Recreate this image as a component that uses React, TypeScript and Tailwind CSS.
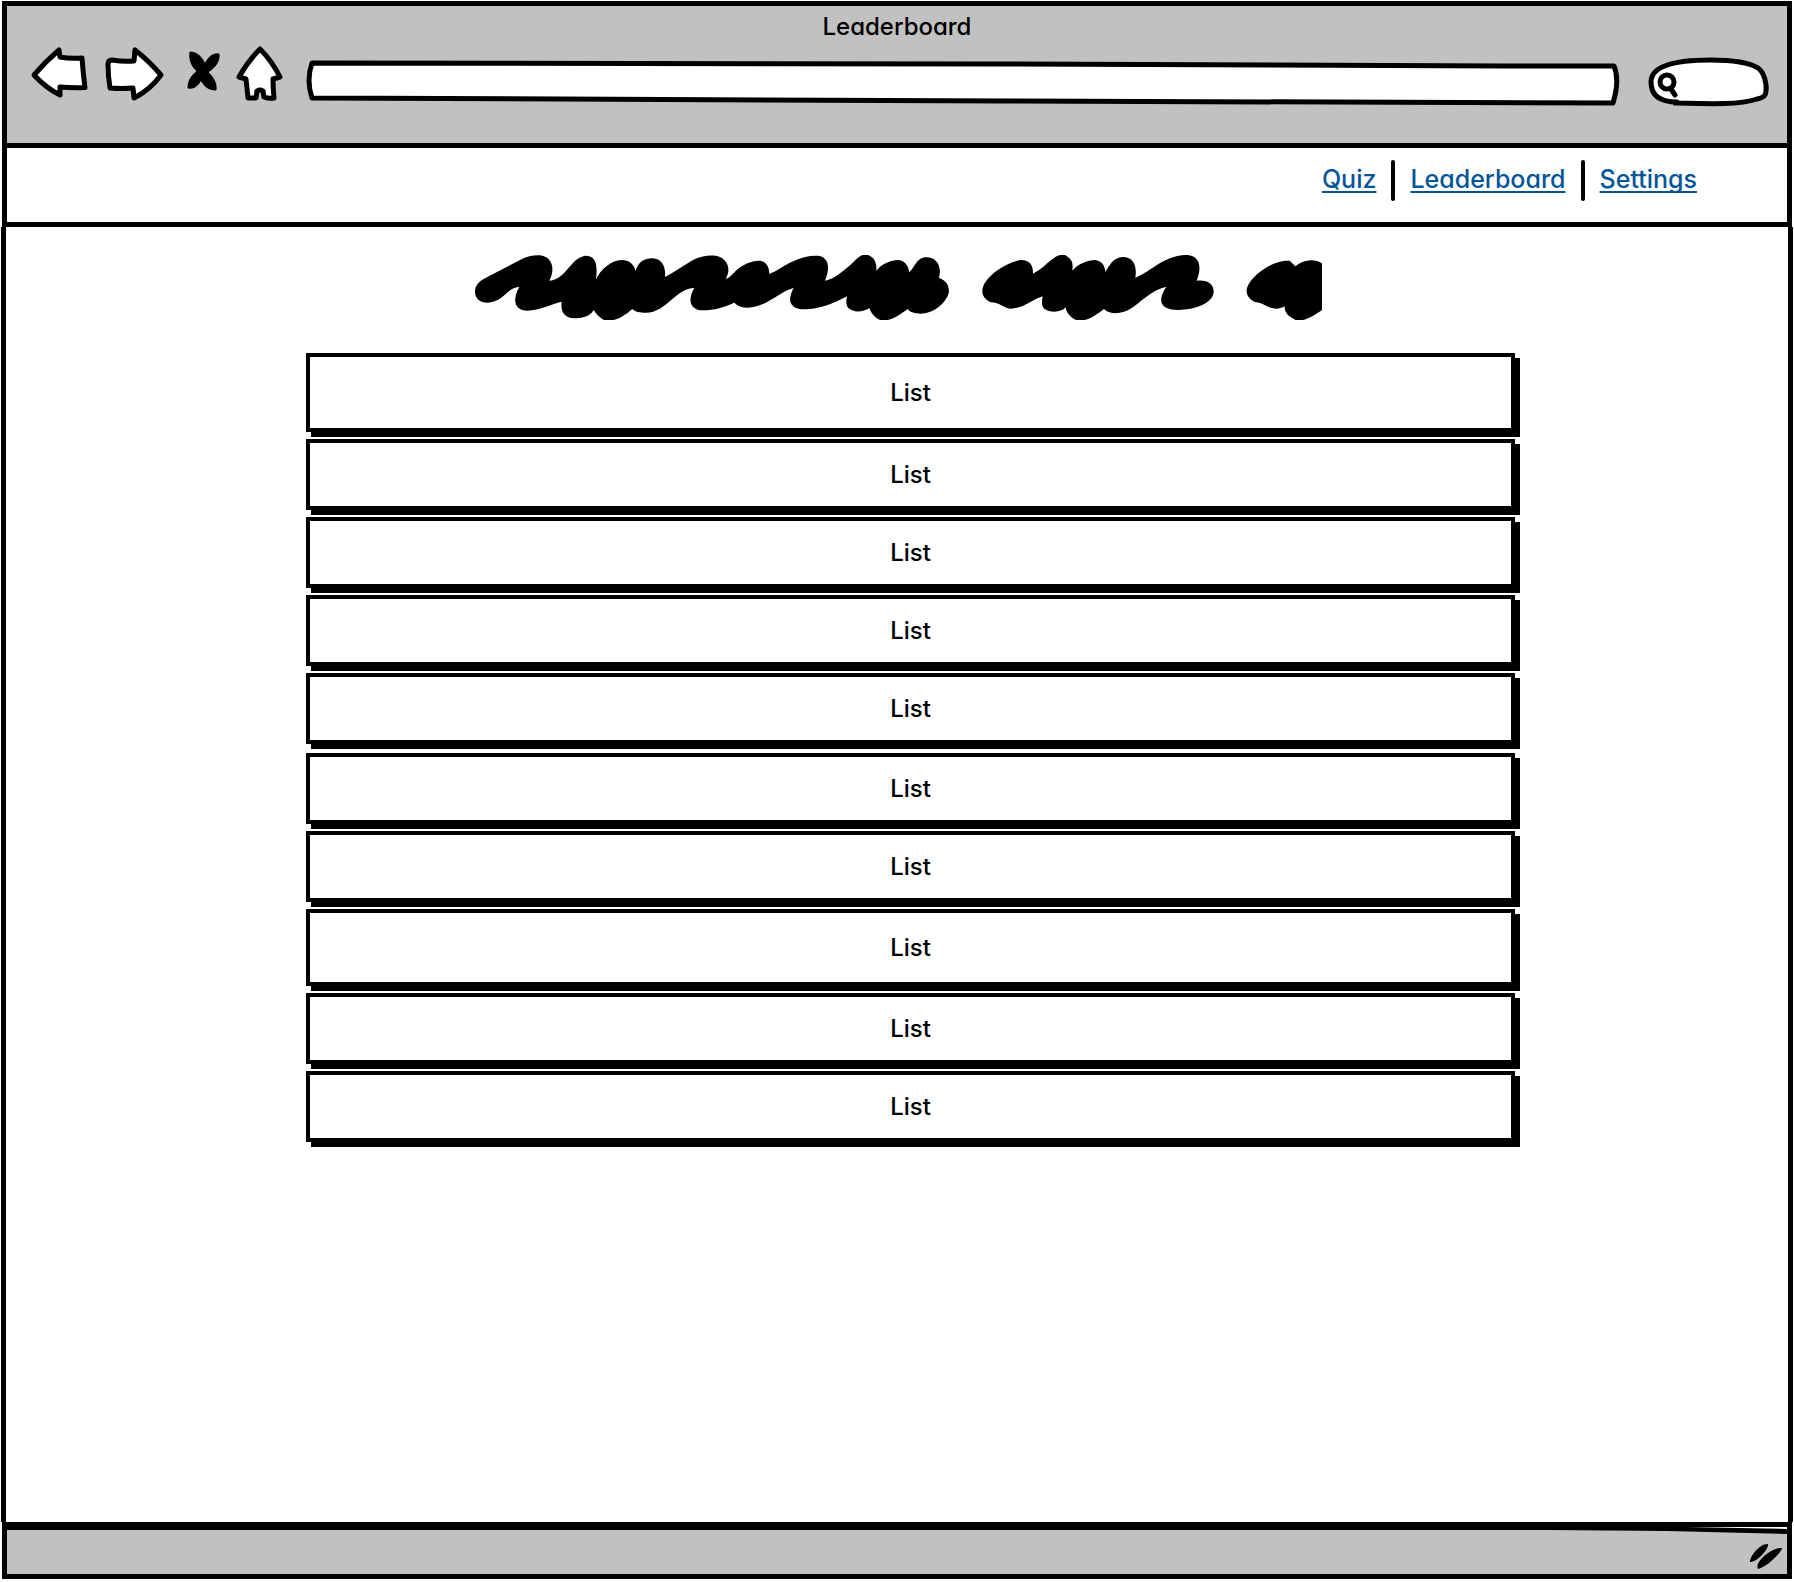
import React from "react";

const rows = [
  { height: "h-[79px]", gap: "mb-[7px]" },
  { height: "h-[71px]", gap: "mb-[7px]" },
  { height: "h-[71px]", gap: "mb-[7px]" },
  { height: "h-[71px]", gap: "mb-[7px]" },
  { height: "h-[71px]", gap: "mb-[9px]" },
  { height: "h-[71px]", gap: "mb-[7px]" },
  { height: "h-[71px]", gap: "mb-[7px]" },
  { height: "h-[77px]", gap: "mb-[7px]" },
  { height: "h-[71px]", gap: "mb-[7px]" },
  { height: "h-[71px]", gap: "mb-0" },
];

const links = ["Quiz", "Leaderboard", "Settings"];

const outline = {
  fill: "white",
  stroke: "black",
  strokeWidth: 5,
  strokeLinejoin: "round" as const,
  strokeLinecap: "round" as const,
};

function Toolbar() {
  return (
    <div className="flex items-end gap-2 pl-[23px] pr-[17px] mt-px">
      <button type="button" aria-label="Back" className="shrink-0">
        <svg width="64" height="64" viewBox="30 44 64 64" {...outline}>
          <path d="M34 75 Q46 61 59 50 L60 57 Q70 59 82 58 Q83 72 85 87.5 Q72 88 60 87 L60 95 Q46 88 34 75 Z" />
        </svg>
      </button>
      <button type="button" aria-label="Forward" className="shrink-0">
        <svg width="72" height="64" viewBox="102 44 72 64" {...outline}>
          <path d="M161 75 Q149 61 135 50 L134 61 Q124 62 112 60 Q108 60 108 64 Q108 76 110 88 Q122 89 133 88 L134 98 Q150 90 161 75 Z" />
        </svg>
      </button>
      <button type="button" aria-label="Stop" className="shrink-0">
        <svg width="44" height="64" viewBox="182 44 44 64">
          <path d="M190 52 C197 52 202 57 205 64 C208 57 213 53 219 54 C220 61 215 68 208 72 C213 77 217 83 216 90 C208 90 204 86 201 80 C198 86 194 89 188 88 C188 81 191 76 197 71 C191 66 189 59 190 52 Z" stroke="black" strokeWidth="1" />
        </svg>
      </button>
      <button type="button" aria-label="Home" className="shrink-0">
        <svg width="56" height="64" viewBox="234 44 56 64" {...outline}>
          <path d="M260 49 Q272 61 280 77 L273 79 Q273 88 274 98 Q269 99 264 97 L263 91 Q260 89 257 91 L256 98 L248 98 Q247 88 246 79 L239 77 Q248 61 260 49 Z" />
        </svg>
      </button>
      <div className="relative ml-2 h-[50px] min-w-0 flex-1">
        <svg
          className="absolute inset-0 size-full"
          viewBox="0 0 1314 50"
          preserveAspectRatio="none"
          aria-hidden="true"
          {...outline}
        >
          <path d="M6 5 L700 6 L1200 8 L1308 8 Q1314 22 1307 45 L700 43 L6 40 Q0 22 6 5 Z" />
        </svg>
        <input type="text" aria-label="Address" className="relative size-full bg-transparent px-4 outline-none" />
      </div>
      <div className="relative ml-4 h-[54px] w-[126px] shrink-0">
        <svg className="absolute inset-0 size-full" viewBox="-1 0 126 54" aria-hidden="true" {...outline}>
          <path d="M32 48 C16 48 6 42 6 28 C6 12 30 6 65 6 C88 6 105 9 113 14 C119 18 122 30 121 37 C121 42 118 44 112 45 C95 51 65 50 30 49" />
          <circle cx="22" cy="28" r="7" />
          <path d="M26 35 L30 41" />
        </svg>
        <input type="search" aria-label="Search" className="relative size-full bg-transparent pl-10 pr-3 outline-none" />
      </div>
    </div>
  );
}

function Scribble() {
  return (
    <svg
      className="mx-auto mt-[13px] block h-[90px] w-[880px]"
      viewBox="-9 0 2640 270"
      role="img"
      aria-label="Heading"
    >
      <path d="M45 155 C45 138 55 124 82 111 L180 60 C205 47 228 44 247 47 C275 53 287 85 268 122 C285 122 300 112 315 96 C335 74 348 52 375 47 C405 46 414 68 408 118 C422 88 455 60 485 60 C508 60 522 74 527 93 C534 66 552 55 577 55 C606 56 618 80 615 111 C640 98 665 80 695 62 C725 46 758 43 778 50 C805 62 813 90 797 116 C812 114 818 98 835 86 C860 68 885 60 904 63 C922 68 928 85 928 102 C955 92 975 74 1000 64 C1032 49 1062 45 1082 49 C1107 58 1110 86 1095 122 C1125 117 1145 96 1170 76 C1185 62 1197 48 1208 45 L1224 45 C1245 52 1251 72 1249 93 C1263 72 1292 60 1315 60 C1335 62 1345 77 1348 97 C1362 85 1368 57 1393 52 C1425 47 1448 75 1437 113 C1458 121 1470 138 1466 160 C1455 194 1418 221 1381 221 C1366 221 1350 217 1343 207 C1325 220 1305 236 1283 240 L1260 240 C1241 231 1233 218 1228 204 C1208 218 1178 217 1166 205 C1157 196 1158 182 1161 169 C1122 191 1072 209 1032 208 C988 207 981 180 1001 144 C966 152 933 187 890 199 C862 207 838 204 823 188 C795 201 762 211 728 211 C689 210 682 178 703 144 C676 145 658 160 638 176 C612 199 588 218 558 218 C540 218 525 216 517 207 C500 222 480 236 461 240 L432 240 C418 234 408 221 401 210 C390 229 368 235 343 235 C312 234 301 214 305 185 C275 192 240 211 202 212 C166 212 154 183 178 141 C145 139 130 187 82 188 C60 188 45 175 45 155 Z" />
      <path
        transform="translate(1500 0)"
        d="M67 154 C67 116 128 71 180 60 C208 58 220 75 219 101 C242 91 264 66 285 52 C294 45 300 44 315 45 C336 58 340 66 337 92 C352 73 382 60 407 60 C426 64 435 77 436 96 C448 77 459 53 488 51 C519 51 532 75 526 113 C560 99 584 76 618 60 C652 44 685 41 701 50 C723 64 722 91 710 122 C743 118 762 132 761 157 C758 190 704 210 655 210 C598 210 592 180 619 140 C573 150 540 189 509 208 C487 222 450 225 432 207 C414 220 394 237 372 240 L348 240 C329 231 319 217 317 202 C304 218 269 219 253 206 C244 198 245 184 248 169 C218 178 190 206 151 206 C133 207 121 187 92 187 C77 180 67 168 67 154 Z"
      />
      <path
        transform="translate(1500 0)"
        d="M860 153 C861 118 924 68 974 62 L989 62 L1006 79 C1028 60 1062 54 1086 70 L1086 210 C1066 223 1048 237 1028 240 L1007 240 C985 229 973 219 974 199 C957 210 937 206 924 200 C909 193 900 187 884 186 C871 179 860 169 860 153 Z"
      />
    </svg>
  );
}

export default function App() {
  return (
    <div className="flex min-h-screen flex-col bg-white px-0.5 pb-[3px] pt-px font-['Inter','Liberation_Sans',sans-serif] text-[24px] font-medium leading-8 text-black [font-feature-settings:'cv11']">
      <header className="border-5 border-black bg-[#c1c1c1] pb-[35px] pt-[5px]">
        <h1 className="text-center">Leaderboard</h1>
        <Toolbar />
      </header>
      <nav className="flex justify-end border-x-5 border-b-5 border-black pb-[21px] pr-[90px] pt-3 text-[25px]">
        {links.map((label, i) => (
          <React.Fragment key={label}>
            {i > 0 && <span className="mx-[15px] h-[41px] w-1 rounded-full bg-black" />}
            <a
              href="#"
              className="pt-[3px] leading-8 text-[#04549a] underline decoration-2 underline-offset-3 [text-decoration-skip-ink:none]"
            >
              {label}
            </a>
          </React.Fragment>
        ))}
      </nav>
      <main className="-mx-px flex-1 border-x-5 border-black">
        <Scribble />
        <ul className="mt-[23px] pl-[300px] pr-[273px]">
          {rows.map((row, i) => (
            <li
              key={i}
              className={`flex items-center justify-center border-4 border-black bg-white shadow-[5px_5px_0_0_#000] ${row.height} ${row.gap}`}
            >
              List
            </li>
          ))}
        </ul>
      </main>
      <footer className="relative flex h-[57px] justify-end border-5 border-t-8 border-black bg-[#c1c1c1]">
        <svg
          className="absolute -top-2 right-0 h-3.5 w-60"
          viewBox="0 0 240 14"
          preserveAspectRatio="none"
          aria-hidden="true"
        >
          <path d="M0 0 H240 V12 L120 9 L0 8 Z" />
          <path d="M140 5 L240 5 V7 Z" fill="white" />
        </svg>
        <svg width="34" height="28" viewBox="1750 1543 34 28" className="mr-1 mt-3" aria-hidden="true">
          <path d="M1751 1563 C1751 1556 1762 1544 1769 1545 C1770 1550 1758 1563 1751 1563 Z M1759 1570 C1755 1563 1773 1548 1783 1549 C1782 1555 1766 1569 1759 1570 Z" />
        </svg>
      </footer>
    </div>
  );
}
